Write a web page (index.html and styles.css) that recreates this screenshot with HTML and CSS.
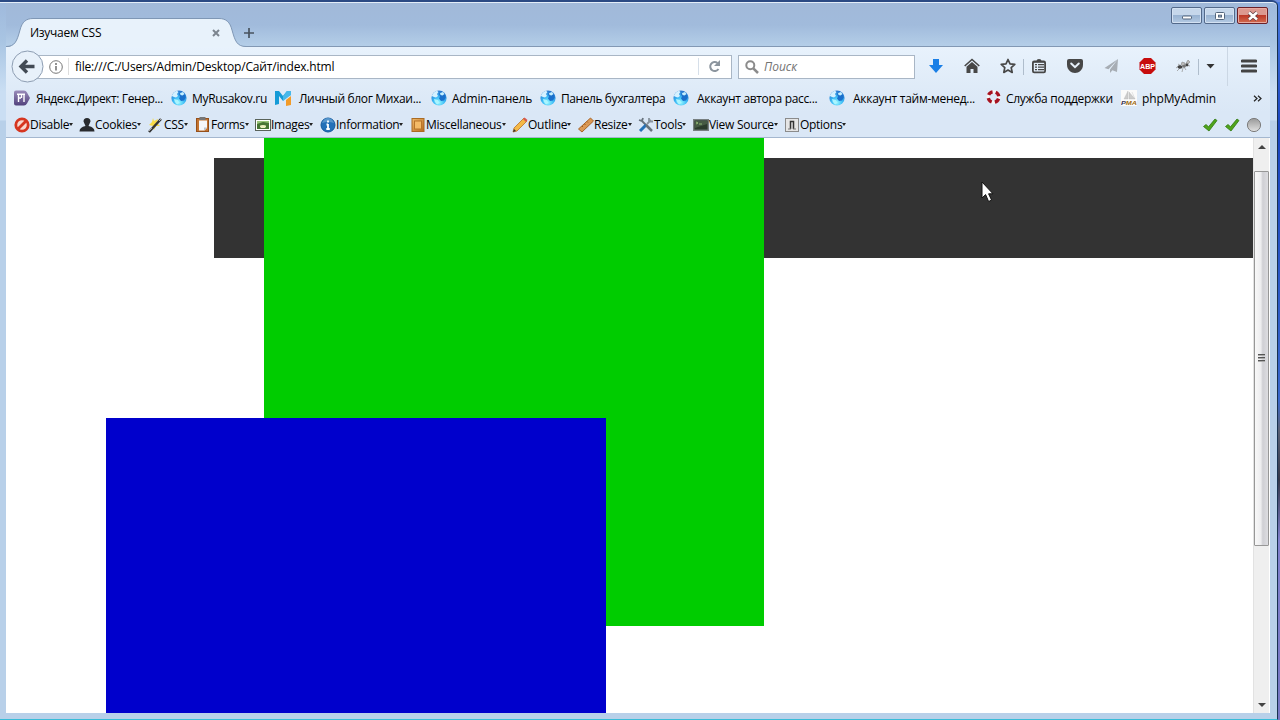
FILE: index.html
```html
<!DOCTYPE html>
<html lang="ru">
<head>
<meta charset="utf-8">
<title>Изучаем CSS</title>
<link rel="stylesheet" href="styles.css">
</head>
<body>
<svg width="0" height="0" class="defs">
  <defs>
    <radialGradient id="ball" cx=".5" cy=".8" r=".75"><stop offset="0" stop-color="#8ff4ff"/><stop offset=".5" stop-color="#3cb9f5"/><stop offset="1" stop-color="#2a78d0"/></radialGradient>
    <linearGradient id="wood" x2="1" y2="1"><stop stop-color="#f0b96a"/><stop offset="1" stop-color="#b86a1c"/></linearGradient>
    <linearGradient id="grey" x2="0" y2="1"><stop stop-color="#999"/><stop offset="1" stop-color="#e2e2e2"/></linearGradient>
    <linearGradient id="violet" x2="0" y2="1"><stop stop-color="#9a8cba"/><stop offset="1" stop-color="#51417c"/></linearGradient>
    <symbol id="globe" viewBox="0 0 16 16"><circle cx="8" cy="8" r="7.600" fill="url(#ball)"/><path d="M.8 6Q2 2 6 .8L7.500 2 6 4l1 2-2 1.500L3 7z" fill="#d5f1ff"/><path d="M8 4l2-2.500q4.500 1.500 4.800 6L13 10.500l-3 .5-2-2.500 1-2z" fill="#1a6fcb"/><path d="M9 3l3-1 1.500 2-2 1.500L9.500 5z" fill="#c5efff"/><path d="M3 9l4 1 1.500 3L6 14.500Q3.500 13 3 9z" fill="#a9f5ff"/></symbol>
    <symbol id="check" viewBox="0 0 16 16"><path d="M1.500 9.500L4 7.500l2.500 2.300L13 2l2 1.500L7 14z" fill="#50a41b" stroke="#2e7810" stroke-width=".8"/></symbol>
  </defs>
</svg>
<div class="desktop">
<div class="window">
  <header class="titlebar">
    <div class="tabs">
      <svg class="tabshape" width="240" height="30" viewBox="0 0 240 30"><path d="M0 29C9 29 11 23 14 12 16 4 20 .5 27 .5H213C220 .5 224 4 226 12 229 23 231 28.500 240 28.500V30H0z" fill="#e8f2fb"/><path d="M0 28.500C9 28.500 11 23 14 12 16 4 20 .5 27 .5H213C220 .5 224 4 226 12 229 23 231 28.500 240 28.500" fill="none" stroke="#7f97b5"/></svg>
      <span class="tabtitle">Изучаем CSS</span>
      <svg class="tabclose" width="8" height="8" viewBox="0 0 8 8"><path d="M1 1l6 6M7 1L1 7" stroke="#7c858f" stroke-width="2"/></svg>
      <svg class="newtab" width="10" height="10" viewBox="0 0 10 10"><path d="M5 0v10M0 5h10" stroke="#48535f" stroke-width="1.700"/></svg>
    </div>
    <div class="controls">
      <span class="ctl"><svg width="30" height="16"><rect x="10.500" y="8" width="9" height="3" rx="1" fill="#fff" stroke="#53657c"/></svg></span>
      <span class="ctl"><svg width="30" height="16"><rect x="10.500" y="4.500" width="9" height="7" rx="1" fill="#fff" stroke="#53657c"/><rect x="13.500" y="7.200" width="3" height="1.800" fill="#a9bdd6" stroke="#53657c"/></svg></span>
      <span class="ctl close"><svg width="30" height="16"><path d="M11 4.500l8 7M19 4.500l-8 7" stroke="#5d3c42" stroke-width="4"/><path d="M11 4.500l8 7M19 4.500l-8 7" stroke="#fff" stroke-width="2.600"/></svg></span>
    </div>
  </header>

  <nav class="nav">
    <svg class="back" width="33" height="33" viewBox="0 0 33 33"><circle cx="16.500" cy="16.500" r="15.500" fill="#e8f1fa" stroke="#8d9db2"/><path d="M10 16.500h13.500M16 10.500l-6 6 6 6" fill="none" stroke="#424a54" stroke-width="3.400"/></svg>
    <div class="urlbar">
      <svg class="info" width="14" height="14" viewBox="0 0 14 14"><circle cx="7" cy="7" r="6.300" fill="none" stroke="#777"/><path d="M7 6v4.500M7 3v2" stroke="#777" stroke-width="1.600"/></svg>
      <span class="url">file:///C:/Users/Admin/Desktop/Сайт/index.html</span>
      <span class="reload"><svg width="13" height="13" viewBox="0 0 13 13"><path d="M10.500 9A4.500 4.500 0 1 1 9.500 3" fill="none" stroke="#8c959e" stroke-width="2"/><path d="M12 0v6H6z" fill="#8c959e"/></svg></span>
    </div>
    <div class="search">
      <svg width="14" height="14" viewBox="0 0 14 14"><circle cx="5.300" cy="5.300" r="4" fill="none" stroke="#8b8b8b" stroke-width="2"/><path d="M8.300 8.300L13 13" stroke="#8b8b8b" stroke-width="2.500"/></svg>
      <span class="ph">Поиск</span>
    </div>
    <div class="tools">
      <svg width="16" height="16"><path d="M5 1h6v6h4L8 15 1 7h4z" fill="#1a7fe6"/></svg>
      <svg width="16" height="16"><path d="M.7 8L8 1.500 15.300 8" fill="none" stroke="#474747" stroke-width="1.600"/><path d="M2.500 8.700L8 4l5.500 4.700V15H9.500v-4h-3v4h-4z" fill="#474747"/></svg>
      <svg width="16" height="16"><path d="M8 1.500l2 4.400 4.800.5-3.600 3.200 1 4.800L8 12l-4.200 2.400 1-4.800L1.200 6.400 6 5.900z" fill="none" stroke="#474747" stroke-width="1.700" stroke-linejoin="round"/></svg>
      <svg width="16" height="16"><path d="M5.500 3q0-2 2.500-2t2.500 2" fill="#474747"/><rect x="1.900" y="3.400" width="12.200" height="11" rx="1.300" fill="none" stroke="#474747" stroke-width="1.800"/><path d="M2 4h12M4 6.700h2M7 6.700h6M4 9.200h2M7 9.200h6M4 11.700h2M7 11.700h6" stroke="#474747" stroke-width="1.300"/></svg>
      <svg width="16" height="16"><path d="M2 1h12q2 0 2 2v3.500C16 12 12 15 8 15S0 12 0 6.500V3q0-2 2-2z" fill="#474747"/><path d="M4.200 5.500L8 9.200l3.800-3.700" fill="none" stroke="#e7f0f9" stroke-width="2" stroke-linecap="round"/></svg>
      <svg width="16" height="16"><path d="M14 1L.5 10l4 1.200zM14 1L6 11.500V15l2.400-2.700L13 14z" fill="#a7adb4"/></svg>
      <svg width="17" height="16"><path d="M5 0h7l4.500 4.500v7L12 16H5L.5 11.500v-7z" fill="#c70d0d"/><text x="8.500" y="11" text-anchor="middle" textLength="15" lengthAdjust="spacingAndGlyphs" class="abp">ABP</text></svg>
      <svg width="16" height="16"><path d="M1 10l4-3M2 13l4-4M7 14l1-4M11 12l-2-3M15 8l-4-1M3 6l3 2" stroke="#999" stroke-width=".8"/><ellipse cx="5" cy="9" rx="2.500" ry="1.800" fill="#444"/><ellipse cx="9" cy="8" rx="2" ry="1.800" fill="#777"/><path d="M6 7l1-3 3 1-1 2M10 7l3-5 2 2-3 3" fill="#bbb" stroke="#888" stroke-width=".6"/><circle cx="12" cy="7" r="1.400" fill="#444"/></svg>
      <svg width="9" height="5"><path d="M.5 0h8l-4 4.500z" fill="#333"/></svg>
      <svg width="16" height="16"><path d="M1.300 3h13.400M1.300 8h13.400M1.300 13h13.400" stroke="#444" stroke-width="3" stroke-linecap="round"/></svg>
      <i class="sep s1"></i><i class="sep s2"></i><i class="sep s3"></i>
    </div>
  </nav>

  <div class="bookmarks">
    <div class="bm b1"><svg width="16" height="16"><path d="M2 .5h8q2 0 3 2L16 8l-3 5.500q-1 2-3 2H2q-2 0-2-2V2.500q0-2 2-2z" fill="url(#violet)"/><path d="M3 4.200h8M4.500 4v8M7.500 4v4M10 4v8M4.500 8H7" fill="none" stroke="#fff" stroke-width="1.400"/></svg><span>Яндекс.Директ: Генер...</span></div>
    <div class="bm b2"><svg width="16" height="16"><use href="#globe"/></svg><span>MyRusakov.ru</span></div>
    <div class="bm b3"><svg width="17" height="16"><path d="M0 1h4l4 5 4-5h4v4l-4 1-4 5-4-5v8l-4 1z" fill="#159bd7"/><path d="M8 6l4-5h4v4L8 11z" fill="#47b8ea"/><path d="M11 10l5-4v9l-5 1z" fill="#f29b28"/></svg><span>Личный блог Михаи...</span></div>
    <div class="bm b4"><svg width="16" height="16"><use href="#globe"/></svg><span>Admin-панель</span></div>
    <div class="bm b5"><svg width="16" height="16"><use href="#globe"/></svg><span>Панель бухгалтера</span></div>
    <div class="bm b6"><svg width="16" height="16"><use href="#globe"/></svg><span>Аккаунт автора расс...</span></div>
    <div class="bm b7"><svg width="16" height="16"><use href="#globe"/></svg><span>Аккаунт тайм-менед...</span></div>
    <div class="bm b8"><svg width="16" height="16"><circle cx="7.500" cy="7" r="5.300" fill="none" stroke="#f5f5f5" stroke-width="3.300"/><circle cx="7.500" cy="7" r="5.300" fill="none" stroke="#a61220" stroke-width="3.300" stroke-dasharray="5 3.325" stroke-dashoffset="-1.700"/></svg><span>Служба поддержки</span></div>
    <div class="bm b9"><svg width="16" height="16"><path d="M0 0h16v16H0z" fill="#fafafa"/><path d="M7 1L3 9h4zM8 2v7h6zM11 2l3 7" fill="#ccc" stroke="#aaa" stroke-width=".3"/><text x="0" y="15" textLength="16" lengthAdjust="spacingAndGlyphs" class="pma"><tspan fill="#333355">P</tspan><tspan fill="#a06a10">MA</tspan></text></svg><span>phpMyAdmin</span></div>
    <svg class="more" width="9" height="7"><path d="M1 .8l3 2.700-3 2.700M5 .8l3 2.700-3 2.700" fill="none" stroke="#222" stroke-width="1.200"/></svg>
  </div>

  <div class="devbar">
    <div class="dv d1"><svg width="16" height="16"><circle cx="8" cy="8" r="6.200" fill="#f8d8cf" stroke="#d63620" stroke-width="2.800"/><path d="M3.500 12.500l9-9" stroke="#d63620" stroke-width="2.800"/></svg><span>Disable</span></div>
    <div class="dv d2"><svg width="16" height="16"><path d="M8 1q3.500 0 3.500 3.500L9.500 9q6 1 6 5.500H.5Q.5 10 6.500 9l-2-4.500Q4.500 1 8 1z" fill="#292b2e"/></svg><span>Cookies</span></div>
    <div class="dv d3"><svg width="16" height="16"><path d="M5 1l1 3 4-2-1 4 3 3-4 0-2 4-1-4-4-1 3-3z" fill="#f7db47"/><path d="M1 15L13 2" stroke="#333" stroke-width="2.500"/><path d="M1 14L4 11M11 4l2-2" stroke="#aaa"/></svg><span>CSS</span></div>
    <div class="dv d4"><svg width="16" height="16"><rect x="1.500" y="1.500" width="12" height="13" fill="#c37431" stroke="#95501b"/><path d="M4 3.500h8V11l-2.500 2.500H4z" fill="#f5f7fa"/><path d="M12 10.500H9v3" fill="#b5c1ce"/><rect x="4.500" y="0" width="6" height="3" fill="#777"/></svg><span>Forms</span></div>
    <div class="dv d5"><svg width="16" height="16"><rect x=".5" y="2.500" width="15" height="11" fill="#fff" stroke="#59635a"/><rect x="2" y="4" width="12" height="8" fill="#477535"/><path d="M2 4h12v2L8 5 2 7z" fill="#98c479"/><path d="M6 11q-3-3 2-3t2 3z" fill="#ecf0c0"/></svg><span>Images</span></div>
    <div class="dv d6"><svg width="16" height="16"><circle cx="8" cy="8" r="7" fill="#2370b8" stroke="#13599d"/><path d="M2 6q2-5 6-5t6 5q-6-2-12 0" fill="#5796cc"/><path d="M8 7v5M6.500 7.500H8M6.300 12h3.500M8 3.500v2" stroke="#fff" stroke-width="1.800"/></svg><span>Information</span></div>
    <div class="dv d7"><svg width="14" height="16"><rect x="1" y="1.500" width="12" height="13" fill="url(#wood)" stroke="#aa6b23"/><rect x="3.500" y="4" width="7" height="8" fill="#f4ba67" stroke="#b7752a"/></svg><span>Miscellaneous</span></div>
    <div class="dv d8"><svg width="16" height="16"><path d="M1 15l1-4L12 1l3 3L5 14z" fill="#f4b947" stroke="#b97128" stroke-width=".8"/><path d="M11 2l1.500-1.500L15.500 3 14 5z" fill="#d7584e"/><path d="M1 15l1-3 2 2z" fill="#333"/></svg><span>Outline</span></div>
    <div class="dv d9"><svg width="16" height="16"><path d="M.5 12L12.500 1l3 3L4 15z" fill="#db9955" stroke="#a86426"/><path d="M4 9l1 1M6.500 7l1 1M9 4.500l1 1" stroke="#9b581e"/></svg><span>Resize</span></div>
    <div class="dv d10"><svg width="16" height="16"><path d="M3 3l9 9M1 3l3 1 1-3" stroke="#68737d" stroke-width="1.800" fill="none"/><path d="M9 7l4-4M11 1v3.500h4" stroke="#87929d" stroke-width="1.800" fill="none"/><path d="M8 8l-6 6" stroke="#2470b7" stroke-width="3"/><path d="M8 8l6 6" stroke="#68737d" stroke-width="2.500"/></svg><span>Tools</span></div>
    <div class="dv d11"><svg width="16" height="16"><rect x=".7" y="2.700" width="14.600" height="10.600" fill="#2b3c2c" stroke="#777f80" stroke-width="1.400"/><path d="M2 4h12v3L2 11z" fill="#465b44"/><path d="M3 5l2 1-2 1M6 7h3" fill="none" stroke="#a3cf82" stroke-width=".8"/></svg><span>View Source</span></div>
    <div class="dv d12"><svg width="14" height="16"><rect x=".5" y="1.500" width="13" height="13" fill="#e5e5e5" stroke="#8b8b8b"/><path d="M5.500 12V4.500h3V12" fill="none" stroke="#333" stroke-width="1.500"/><path d="M3 12h3M8 12h3" stroke="#777"/></svg><span>Options</span></div>
    <div class="status">
      <svg width="16" height="16"><use href="#check"/></svg>
      <svg width="16" height="16"><use href="#check"/></svg>
      <svg width="16" height="16"><circle cx="8" cy="8" r="6.600" fill="url(#grey)" stroke="#7d7d7d"/></svg>
    </div>
  </div>

  <main class="view">
    <div class="page">
      <div class="box dark"></div><div class="box green"></div><div class="box blue"></div>
      <svg class="cursor" width="15" height="23" viewBox="0 0 15 23"><path d="M1 1v16l3.600-3.400L7.600 20.500l3-1.400-3-6.300H12z" fill="#fff" stroke="#111"/></svg>
    </div>
    <div class="scroll">
      <svg width="8" height="4"><path d="M0 4l4-4 4 4z" fill="#444"/></svg>
      <div class="thumb"><i></i><i></i><i></i></div>
      <svg class="dn" width="8" height="4"><path d="M0 0h8L4 4z" fill="#444"/></svg>
    </div>
  </main>
</div>
</div>
</body>
</html>
```
FILE: styles.css
```css
* { box-sizing: border-box; }
body { margin: 0; font: 12px "Open Sans", "Noto Sans", sans-serif; color: #000; overflow: hidden; }
svg { display: block; flex: none; }
.defs { position: absolute; }
.desktop { width: 1280px; height: 720px; background: linear-gradient(#6f8fe0 0 2px, transparent 2px), linear-gradient(#4b7ce2, #1744c0 130px, #3a68cb 400px, #5a6176 430px, #34384b 480px, #8080cd 540px, #7676c2); }
.window { width: 1278px; height: 720px; padding: 0 7px 6px 6px; border-top: 2px solid #2b4a84; border-right: 1px solid #18324f; border-bottom: 1px solid #38bcd8; border-radius: 0 6px 0 0; background: linear-gradient(#9fb9dc, #a9c5e3 40px, #cadef3 90px, #cadef3 118px, #b8d0e9 119px, #b8d0e9); display: flex; flex-direction: column; box-shadow: inset 0 1px #e4eef9; }
.titlebar { height: 45px; display: flex; justify-content: space-between; background: linear-gradient(#a1b9d9, #a1bbdc 22px, #b4cee8); border-top: 1px solid #e3edf8; border-bottom: 1px solid #8298b4; flex: none; }
.tabs { display: grid; grid-template-columns: 240px 20px; margin-top: 15px; height: 30px; }
.tabshape, .tabtitle, .tabclose { grid-area: 1 / 1; }
.tabtitle { margin: 6px 0 0 24px; z-index: 1; letter-spacing: -.28px; }
.tabclose { margin: 11px 0 0 206px; z-index: 1; }
.newtab { margin: 10px 0 0 -2px; }
.controls { display: flex; gap: 2px; margin: 4px 2px 0 0; }
.ctl { width: 31px; height: 17px; border: 1px solid #53698a; border-radius: 2px; background: linear-gradient(#c6d7eb 0 46%, #99b3d2 50%, #b4cae3); box-shadow: inset 0 0 0 1px #d3e1f2; display: flex; justify-content: center; align-items: center; }
.close { border-color: #6b2028; background: linear-gradient(#dc9990 0 46%, #bd3928 50%, #d26c50); box-shadow: inset 0 0 0 1px #e9aaa0; }
.nav { height: 39px; display: flex; align-items: center; background: linear-gradient(#e8f2fc, #dfebf8); flex: none; }
.back { margin-left: 5px; z-index: 1; }
.urlbar { width: 697px; height: 24px; margin-left: -9px; border: 1px solid #a9b6c5; background: #fff; display: flex; align-items: center; }
.info { margin-left: 13px; }
.url { flex: 1; margin-left: 5px; padding-left: 6px; border-left: 1px solid #ddd; line-height: 17px; white-space: nowrap; letter-spacing: -.18px; }
.reload { width: 33px; height: 17px; border-left: 1px solid #d6dfe9; padding: 2px 0 0 9px; }
.search { width: 177px; height: 24px; margin-left: 6px; border: 1px solid #a9b6c5; background: #fff; display: flex; align-items: center; padding-left: 6px; gap: 5px; }
.ph { color: #737373; font-style: italic; }
.tools { display: grid; grid-template-columns: 36px 36px 31px 36px 37px 35px 36px 31px 35px 20px; align-items: center; position: relative; margin: -1px 0 0 13px; }
.tools svg { grid-row: 1; }
.sep { position: absolute; width: 1px; background: #afbdcc; height: 16px; top: 1px; }
.s1 { left: 95px; } .s2 { left: 270px; } .s3 { left: 299px; height: 39px; top: -11px; background: #cbd7e4; }
.abp { font: bold 7.500px "Liberation Sans", sans-serif; fill: #fff; }
.pma { font: italic bold 6px "Liberation Sans", sans-serif; }
.bookmarks { height: 26px; display: flex; align-items: center; padding: 0 0 2px 8px; background: linear-gradient(#dfebf8, #dae7f6); flex: none; }
.bm { display: flex; align-items: center; white-space: nowrap; flex: none; gap: 5px; }
.b1 { width: 157px; gap: 6px; } .b2 { width: 104px; } .b3 { width: 156px; gap: 7px; } .b4 { width: 109px; } .b5 { width: 133px; }
.b6 { width: 156px; gap: 8px; } .b7 { width: 157px; gap: 8px; } .b8 { width: 135px; gap: 4px; } .b9 { width: 132px; }
.bm span, .dv span { letter-spacing: -.28px; }
.bm.b1 span { letter-spacing: -.41px; }
.bm.b3 span { letter-spacing: -.34px; }
.bm.b4 span { letter-spacing: -.22px; }
.bm.b5 span { letter-spacing: -.42px; }
.bm.b2 span, .bm.b6 span { letter-spacing: -.33px; }
.bm.b9 span { letter-spacing: -.13px; }
.devbar { height: 26px; display: flex; align-items: center; padding-left: 8px; background: #dae7f6; border-bottom: 1px solid #a4b7cf; flex: none; }
.dv { display: flex; align-items: center; white-space: nowrap; flex: none; }
.dv::after { content: ""; border: 2.500px solid transparent; border-top: 3px solid #222; border-bottom: 0; }
.d7 svg, .d12 svg { margin-right: 1px; }
.d1 { width: 65px; } .d2 { width: 69px; } .d3 { width: 47px; } .d4 { width: 60px; } .d5 { width: 65px; } .d6 { width: 91px; }
.d7 { width: 101px; } .d8 { width: 66px; } .d9 { width: 60px; } .d10 { width: 55px; } .d11 { width: 92px; } .d12 { width: 62px; }
.status { display: flex; gap: 6px; margin-left: auto; padding-right: 8px; }
.view { flex: 1; display: flex; min-height: 0; background: #fff; }
.page { flex: 1; position: relative; overflow: hidden; background: #fff; }
.box { position: absolute; }
.dark { left: 208px; top: 20px; width: 1039px; height: 100px; background: #333; }
.green { left: 258px; top: 0; width: 500px; height: 488px; background: #0c0; }
.blue { left: 100px; top: 280px; width: 500px; height: 300px; background: #00c; }
.cursor { position: absolute; left: 975px; top: 43px; }
.scroll { width: 16px; margin-right: 1px; background: #efefef; border-left: 1px solid #e2e2e2; display: flex; flex-direction: column; align-items: center; padding: 7px 0 6px; }
.thumb { width: 15px; height: 375px; margin-top: 22px; border: 1px solid #979797; border-radius: 1px; background: linear-gradient(90deg, #f8f8f8, #ededef 45%, #cfcfd4 60%, #dddde1); display: flex; flex-direction: column; align-items: center; justify-content: center; gap: 2px; padding-bottom: 2px; }
.thumb i { width: 7px; height: 1px; background: #555; box-shadow: 0 1px #aaa; }
.dn { margin-top: auto; }
```
